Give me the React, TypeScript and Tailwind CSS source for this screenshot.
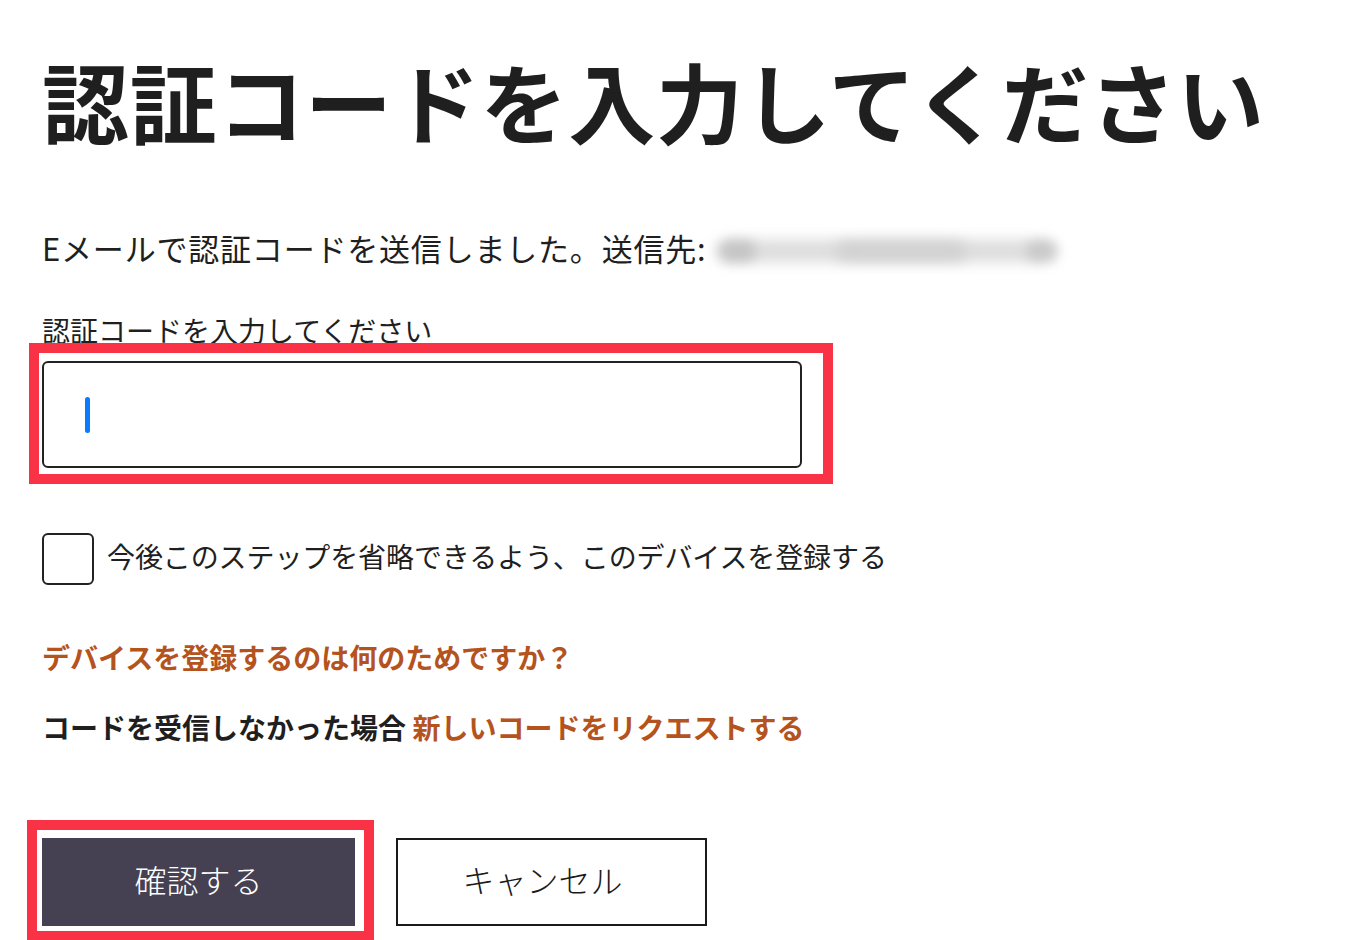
import React from "react";

function Highlight({ className }: { className: string }) {
  // red annotation frame drawn over the control
  return (
    <div
      className={`pointer-events-none absolute border-[10px] border-[#fa3246] ${className}`}
    />
  );
}

export default function App() {
  return (
    <div className="min-h-[940px] bg-white pl-[42px] font-['Noto_Sans_CJK_JP','Noto_Sans',sans-serif] text-[#1f1f1f] overflow-hidden">
      {/* 見出し */}
      <h1 className="pt-[48px] text-[87px] leading-[104px] font-bold tracking-[0.7px] whitespace-nowrap">
        認証コードを入力してください
      </h1>

      {/* 送信先 */}
      <div className="mt-[76px] flex items-center text-[31px] leading-[40px] tracking-[0.8px] whitespace-nowrap">
        <span>Eメールで認証コードを送信しました。送信先:</span>
        {/* 伏せ字のアドレス */}
        <span className="relative ml-[10px] inline-block h-[40px] w-[350px]">
          <span className="absolute left-0 top-[12px] h-[22px] w-[340px] rounded-full bg-[#dcdcdc] blur-[7px]" />
          <span className="absolute left-[4px] top-[13px] h-[20px] w-[36px] rounded-full bg-[#c4c4c4] blur-[6px]" />
          <span className="absolute left-[120px] top-[14px] h-[18px] w-[130px] rounded-full bg-[#d0d0d0] blur-[7px]" />
          <span className="absolute left-[310px] top-[14px] h-[18px] w-[30px] rounded-full bg-[#c8c8c8] blur-[6px]" />
        </span>
      </div>

      {/* 入力欄 */}
      <label className="mt-[44px] block text-[28px] leading-[36px] whitespace-nowrap">
        認証コードを入力してください
      </label>
      <div className="relative mt-[13px] w-[760px]">
        <div className="flex h-[107px] items-center rounded-[6px] border-2 border-[#222] pl-[41px]">
          <div className="h-[36px] w-[5px] rounded-full bg-[#0a7aff]" />
        </div>
        <Highlight className="-top-[18px] -left-[13px] -right-[31px] -bottom-[16px]" />
      </div>

      {/* チェックボックス */}
      <div className="mt-[65px] flex items-center gap-[13px]">
        <div className="h-[52px] w-[52px] rounded-[6px] border-2 border-[#222]" />
        <span className="mb-[6px] text-[28px] leading-[36px] tracking-[-0.1px] whitespace-nowrap">
          今後このステップを省略できるよう、このデバイスを登録する
        </span>
      </div>

      {/* リンク */}
      <a className="mt-[54px] block text-[28px] leading-[36px] font-bold text-[#b4531d] whitespace-nowrap">
        デバイスを登録するのは何のためですか？
      </a>
      <p className="mt-[34px] text-[28px] leading-[36px] font-bold whitespace-nowrap">
        コードを受信しなかった場合{" "}
        <a className="text-[#b4531d]">新しいコードをリクエストする</a>
      </p>

      {/* ボタン */}
      <div className="mt-[93px] flex gap-[41px]">
        <div className="relative">
          <button className="h-[88px] w-[313px] bg-[#454152] pb-[6px] text-[32px] font-light text-white">
            確認する
          </button>
          <Highlight className="-top-[18px] -left-[15px] -right-[19px] -bottom-[15px] border-[9px]" />
        </div>
        <button className="h-[88px] w-[311px] border-2 border-[#1a1a1a] bg-white pb-[6px] pr-[18px] text-[32px] font-light text-[#1a1a1a]">
          キャンセル
        </button>
      </div>
    </div>
  );
}
